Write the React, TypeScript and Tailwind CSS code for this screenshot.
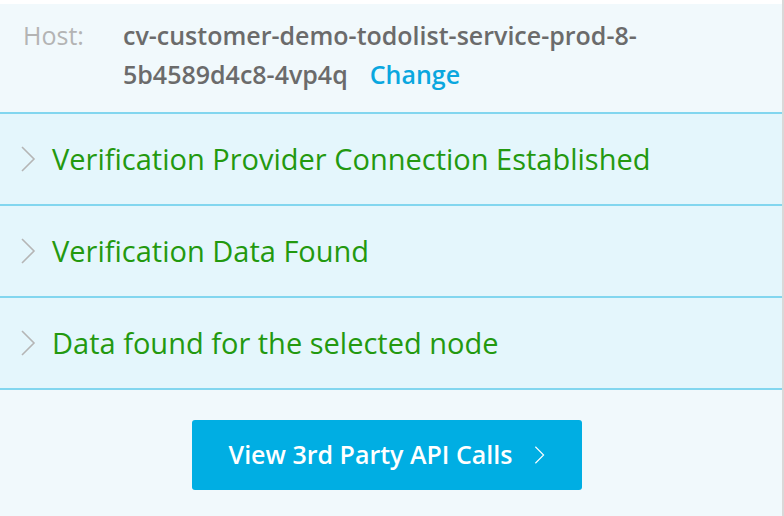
const rows = [
  "Verification Provider Connection Established",
  "Verification Data Found",
  "Data found for the selected node",
];

const Chevron = ({ className }: { className: string }) => (
  <svg viewBox="0 0 16 28" className={className} fill="none" stroke="currentColor" strokeWidth="1.6">
    <path d="M2 2 L14 14 L2 26" />
  </svg>
);

export default function App() {
  return (
    <div className="w-[784px] h-[516px] bg-white flex" style={{ fontFamily: '"Open Sans", "Noto Sans", sans-serif' }}>
      <div className="flex-1 flex flex-col pt-[4px]">
        <div className="flex-1 flex flex-col bg-[#f1f9fc]">
          {/* Host info */}
          <div className="h-[108px] flex pl-[23px] pt-[12px] text-[25px] leading-[39px]">
            <span className="w-[100px] text-[#b4b4b4]">Host:</span>
            <div className="w-[560px] text-[#6b6b6b] font-semibold">
              cv-customer-demo-todolist-service-prod-8-
              <br />
              5b4589d4c8-4vp4q
              <span className="ml-[22px] text-[#0aa7df]">Change</span>
            </div>
          </div>
          {/* Status rows */}
          {rows.map((label) => (
            <div
              key={label}
              className="h-[92px] flex items-center gap-[16px] pl-[20px] border-t-2 border-[#82d6ef] bg-[#e4f6fc]"
            >
              <Chevron className="w-[16px] h-[28px] text-[#b5b5b5]" />
              <span className="text-[29px] text-[#23990f]">{label}</span>
            </div>
          ))}
          {/* Footer */}
          <div className="flex-1 border-t-2 border-[#82d6ef] flex justify-center pt-[30px] pr-[8px]">
            <button className="w-[390px] h-[70px] rounded-[3px] bg-[#00aee3] text-white flex items-center justify-center gap-[22px] text-[25px] font-semibold">
              View 3rd Party API Calls
              <Chevron className="w-[11px] h-[20px] text-white" />
            </button>
          </div>
        </div>
      </div>
      <div className="w-[2px] bg-[#d9d9d9]" />
    </div>
  );
}
